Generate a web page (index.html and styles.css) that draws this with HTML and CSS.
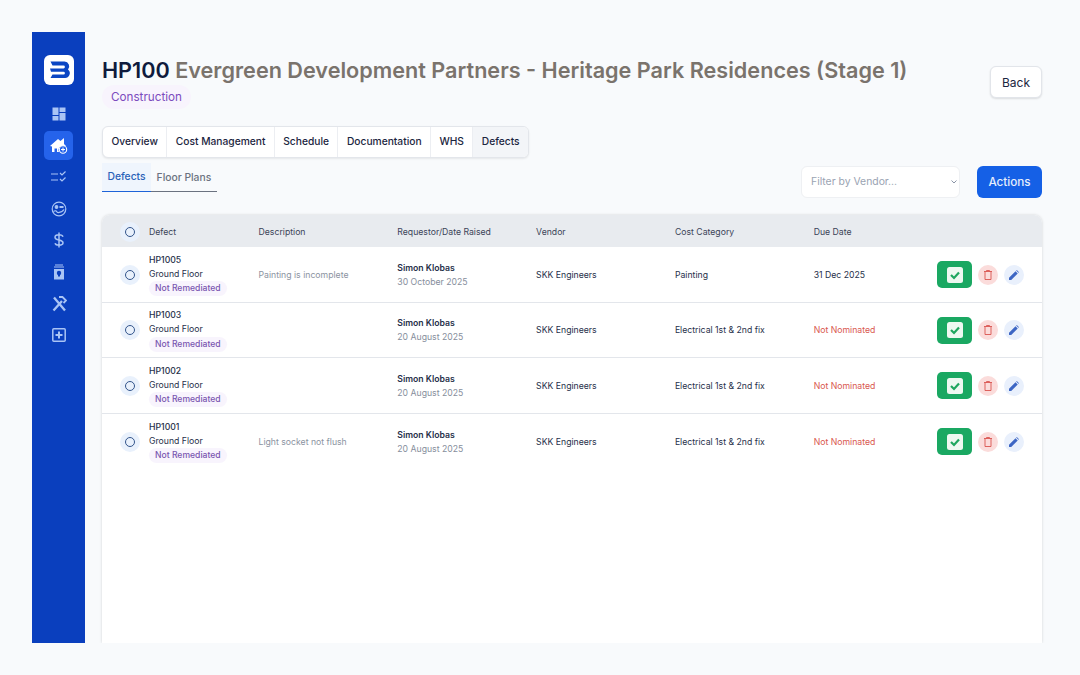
FILE: index.html
```html
<!DOCTYPE html>
<html lang="en">
<head>
<meta charset="utf-8">
<title>HP100 Defects</title>
<link rel="stylesheet" href="styles.css">
</head>
<body>
<div class="frame">
  <nav class="sidebar">
    <div class="logo">
      <svg width="30" height="30" viewBox="0 0 30 30"><rect width="30" height="30" rx="6" fill="#fff"/><path d="M6.500 6.500h14a4.800 4.800 0 0 1 3.500 8 4.800 4.800 0 0 1-3.500 8.500H6.500l2-3.400h11a1.400 1.400 0 0 0 0-2.800H7l-1-3.400H19.500a1.400 1.400 0 0 0 0-2.800H8.500z" fill="#0b46c4"/></svg>
    </div>
    <a class="nav-item"><svg width="16" height="16" viewBox="0 0 16 16" fill="#a9c4f5"><rect x="1.500" y="1.500" width="6" height="7.500"/><rect x="8.500" y="1.500" width="6" height="4.500"/><rect x="1.500" y="10" width="6" height="4.500"/><rect x="8.500" y="7" width="6" height="7.500"/></svg></a>
    <a class="nav-item active"><svg width="18" height="17" viewBox="0 0 18 17"><path d="M0 9 8 2l2.500 2L14 1v6l2 2h-3a4 4 0 0 0-4 6H2V9.500z" fill="#fff"/><circle cx="13" cy="12.500" r="3.700" fill="#2563eb" stroke="#fff" stroke-width="1.100"/><path d="M11 12.500h4M13 10.500v4" stroke="#fff" stroke-width="1"/><path d="M4.500 15v-3.500h2.500V15" fill="#2563eb"/></svg></a>
    <a class="nav-item"><svg width="16" height="14" viewBox="0 0 16 14" fill="none" stroke="#a9c4f5" stroke-width="1.200"><path d="M0 4h7M0 10h7M9 3l2 2 3.500-3.500M9 9l2 2 3.500-3.500"/></svg></a>
    <a class="nav-item"><svg width="16" height="16" viewBox="0 0 16 16" fill="none" stroke="#a9c4f5" stroke-width="1.200"><circle cx="8" cy="8" r="6.800"/><path d="M2.500 10.500c2-1.500 3-.5 4 1 2.500.2 5-.7 6.500-3" /><circle cx="5.500" cy="6" r="1.300" fill="#a9c4f5"/><rect x="8.500" y="5" width="4" height="2" fill="#a9c4f5" stroke="none"/></svg></a>
    <a class="nav-item"><svg width="12" height="16" viewBox="0 0 12 16" fill="none" stroke="#a9c4f5" stroke-width="1.500"><path d="M10 4.800C9.500 3.200 8 2.800 6 2.800 4 2.800 2 3.500 2 5.200c0 3.800 8 1.800 8 5.600 0 1.700-2 2.400-4 2.400-2 0-3.500-.5-4-2M6 .5v15"/></svg></a>
    <a class="nav-item"><svg width="12" height="16" viewBox="0 0 12 16"><path d="M2 .5h8v1H2zM1 2.500h10v1H1z" fill="#a9c4f5"/><path d="M1 5h10v10.500H1z" fill="#a9c4f5"/><circle cx="6" cy="9" r="2.200" fill="#0b3fbd"/><rect x="5" y="10.500" width="2" height="2" fill="#0b3fbd"/></svg></a>
    <a class="nav-item"><svg width="16" height="16" viewBox="0 0 16 16" fill="none" stroke="#a9c4f5" stroke-width="2.300"><path d="M2.500 14.500 11 5M3 1.500l11 13"/><path d="M8 1h3.500L15 4.500 12.500 7" stroke-width="1.800"/></svg></a>
    <a class="nav-item"><svg width="14" height="14" viewBox="0 0 14 14" fill="none" stroke="#a9c4f5"><rect x=".8" y=".8" width="12.400" height="12.400" rx="1" stroke-width="1.500"/><path d="M7 3.500v7M3.500 7h7" stroke-width="2"/></svg></a>
  </nav>
  <main class="main">
    <header class="head">
      <div>
        <h1 class="title"><span class="code">HP100</span> Evergreen Development Partners - Heritage Park Residences (Stage 1)</h1>
        <span class="stage">Construction</span>
      </div>
      <button class="back">Back</button>
    </header>
    <div class="tabs">
      <a class="tab">Overview</a><a class="tab">Cost Management</a><a class="tab">Schedule</a><a class="tab">Documentation</a><a class="tab">WHS</a><a class="tab current">Defects</a>
    </div>
    <div class="toolbar">
      <div class="subtabs"><a class="subtab on">Defects</a><a class="subtab">Floor Plans</a></div>
      <div class="controls">
        <div class="filter"><span>Filter by Vendor...</span><svg width="6" height="4" viewBox="0 0 6 4" fill="none" stroke="#8a94a6"><path d="M.5.5 3 3 5.500.5"/></svg></div>
        <button class="actions">Actions</button>
      </div>
    </div>
    <section class="card">
      <div class="row header">
        <span class="radio-wrap"><i class="radio"></i></span>
        <span>Defect</span><span>Description</span><span>Requestor/Date Raised</span><span>Vendor</span><span>Cost Category</span><span>Due Date</span><span></span>
      </div>
      <div class="row">
        <span class="radio-wrap"><i class="radio"></i></span>
        <div class="defect"><b>HP1005</b><span>Ground Floor</span><em>Not Remediated</em></div>
        <span class="muted">Painting is incomplete</span>
        <div class="req"><b>Simon Klobas</b><span>30 October 2025</span></div>
        <span>SKK Engineers</span><span>Painting</span><span>31 Dec 2025</span>
        <div class="btns"><span class="ok"><svg width="16" height="16" viewBox="0 0 16 16"><rect width="16" height="16" rx="2.500" fill="#eef8f1"/><path d="m4 8 3 3 5-5.500" fill="none" stroke="#1fa65f" stroke-width="2.200"/></svg></span><span class="del"><svg width="8" height="10" viewBox="0 0 8 10" fill="none" stroke="#d9534f" stroke-width=".9"><path d="M0 1.500h8M2.500 1.500V.5h3v1M1 1.500v8h6v-8"/></svg></span><span class="edit"><svg width="10" height="10" viewBox="0 0 10 10"><path d="M0 10V7.800L6.500 1.300l2.200 2.200L2.200 10zM7.200.6l.6-.6L10 2.200l-.6.600z" fill="#3d66c4"/></svg></span></div>
      </div>
      <div class="row">
        <span class="radio-wrap"><i class="radio"></i></span>
        <div class="defect"><b>HP1003</b><span>Ground Floor</span><em>Not Remediated</em></div>
        <span class="muted"></span>
        <div class="req"><b>Simon Klobas</b><span>20 August 2025</span></div>
        <span>SKK Engineers</span><span>Electrical 1st &amp; 2nd fix</span><span class="none">Not Nominated</span>
        <div class="btns"><span class="ok"><svg width="16" height="16" viewBox="0 0 16 16"><rect width="16" height="16" rx="2.500" fill="#eef8f1"/><path d="m4 8 3 3 5-5.500" fill="none" stroke="#1fa65f" stroke-width="2.200"/></svg></span><span class="del"><svg width="8" height="10" viewBox="0 0 8 10" fill="none" stroke="#d9534f" stroke-width=".9"><path d="M0 1.500h8M2.500 1.500V.5h3v1M1 1.500v8h6v-8"/></svg></span><span class="edit"><svg width="10" height="10" viewBox="0 0 10 10"><path d="M0 10V7.800L6.500 1.300l2.200 2.200L2.200 10zM7.200.6l.6-.6L10 2.200l-.6.600z" fill="#3d66c4"/></svg></span></div>
      </div>
      <div class="row">
        <span class="radio-wrap"><i class="radio"></i></span>
        <div class="defect"><b>HP1002</b><span>Ground Floor</span><em>Not Remediated</em></div>
        <span class="muted"></span>
        <div class="req"><b>Simon Klobas</b><span>20 August 2025</span></div>
        <span>SKK Engineers</span><span>Electrical 1st &amp; 2nd fix</span><span class="none">Not Nominated</span>
        <div class="btns"><span class="ok"><svg width="16" height="16" viewBox="0 0 16 16"><rect width="16" height="16" rx="2.500" fill="#eef8f1"/><path d="m4 8 3 3 5-5.500" fill="none" stroke="#1fa65f" stroke-width="2.200"/></svg></span><span class="del"><svg width="8" height="10" viewBox="0 0 8 10" fill="none" stroke="#d9534f" stroke-width=".9"><path d="M0 1.500h8M2.500 1.500V.5h3v1M1 1.500v8h6v-8"/></svg></span><span class="edit"><svg width="10" height="10" viewBox="0 0 10 10"><path d="M0 10V7.800L6.500 1.300l2.200 2.200L2.200 10zM7.200.6l.6-.6L10 2.200l-.6.600z" fill="#3d66c4"/></svg></span></div>
      </div>
      <div class="row last">
        <span class="radio-wrap"><i class="radio"></i></span>
        <div class="defect"><b>HP1001</b><span>Ground Floor</span><em>Not Remediated</em></div>
        <span class="muted">Light socket not flush</span>
        <div class="req"><b>Simon Klobas</b><span>20 August 2025</span></div>
        <span>SKK Engineers</span><span>Electrical 1st &amp; 2nd fix</span><span class="none">Not Nominated</span>
        <div class="btns"><span class="ok"><svg width="16" height="16" viewBox="0 0 16 16"><rect width="16" height="16" rx="2.500" fill="#eef8f1"/><path d="m4 8 3 3 5-5.500" fill="none" stroke="#1fa65f" stroke-width="2.200"/></svg></span><span class="del"><svg width="8" height="10" viewBox="0 0 8 10" fill="none" stroke="#d9534f" stroke-width=".9"><path d="M0 1.500h8M2.500 1.500V.5h3v1M1 1.500v8h6v-8"/></svg></span><span class="edit"><svg width="10" height="10" viewBox="0 0 10 10"><path d="M0 10V7.800L6.500 1.300l2.200 2.200L2.200 10zM7.200.6l.6-.6L10 2.200l-.6.600z" fill="#3d66c4"/></svg></span></div>
      </div>
    </section>
  </main>
</div>
</body>
</html>
```
FILE: styles.css
```css
* { box-sizing: border-box; }
html, body { margin: 0; height: 675px; overflow: hidden; background: #f8fafc; font-family: Inter, "Liberation Sans", sans-serif; color: #1b2540; }
.frame { display: flex; height: 611px; margin: 32px 38px 0 32px; }
.sidebar { width: 53px; flex: none; background: #0a3fbe; display: flex; flex-direction: column; align-items: center; padding-top: 23px; }
.logo { height: 30px; margin-bottom: 14px; }
.nav-item { width: 29px; height: 29px; margin-bottom: 2.700px; border-radius: 5px; display: flex; align-items: center; justify-content: center; }
.nav-item.active { background: #2563eb; }
.main { flex: 1; padding-left: 17px; min-width: 0; display: flex; flex-direction: column; }
.head { display: flex; justify-content: space-between; align-items: flex-start; padding-top: 25px; height: 94px; }
.title { margin: 0; font-size: 21.630px; line-height: 26px; font-weight: 600; color: #7a736c; white-space: nowrap; }
.code { color: #0f1b3d; }
.stage { display: inline-block; margin-top: 2px; height: 24px; line-height: 24px; padding: 0 9px; border-radius: 12px; background: #f8f4fd; color: #7c4bbd; font-size: 11.700px; }
.back { margin-top: 9px; width: 52px; height: 32px; background: #fff; border: 1px solid #e2e5ea; border-radius: 6px; box-shadow: 0 1px 2px rgba(0,0,0,.12); font: 400 12px Inter, sans-serif; color: #1b2540; }
.tabs { display: inline-flex; align-self: flex-start; background: #fff; border: 1px solid #e3e6eb; border-radius: 6px; box-shadow: 0 1px 2px rgba(0,0,0,.08); height: 32px; overflow: hidden; }
.tab { display: flex; align-items: center; padding: 0 8.400px 2px; font-size: 10.250px; font-weight: 500; color: #1b2540; border-right: 1px solid #eceef2; white-space: nowrap; }
.tab.current { background: #f3f5f8; border-right: 0; }
.toolbar { display: flex; justify-content: space-between; align-items: flex-start; height: 57px; }
.subtabs { display: flex; margin-top: 5px; border-bottom: 1px solid #6b7280; height: 29px; width: 115px; }
.subtab { display: flex; align-items: center; height: 27px; padding: 0 5.500px; font-size: 10.300px; font-weight: 500; color: #6b7280; white-space: nowrap; }
.subtab.on { background: #eff5fd; color: #2a62b8; margin-bottom: -1px; height: 29px; padding-bottom: 2px; border-bottom: 1px solid #1e63d8; }
.controls { display: flex; gap: 17px; margin-top: 8px; }
.filter { width: 159px; height: 32px; background: #fff; border: 1px solid #eef0f3; border-radius: 6px; display: flex; align-items: center; justify-content: space-between; padding: 0 2px 1px 9px; font-size: 10.400px; color: #9aa3b2; }
.actions { width: 65px; height: 32px; padding: 0 0 1px; background: #1560e6; border: 0; border-radius: 6px; color: #e6eefc; font: 500 11.700px Inter, sans-serif; }
.card { flex: 1; background: #fff; border-radius: 8px 8px 0 0; box-shadow: 0 0 3px rgba(0,0,0,.16); clip-path: inset(-4px -4px 0 -4px); overflow: hidden; }
.row { display: grid; grid-template-columns: 47px 109.500px 138.800px 138.800px 138.800px 138.800px 1fr 122px; align-items: center; height: 55.500px; padding-top: 1px; border-bottom: 1px solid #e3e6eb; font-size: 8.700px; color: #27304a; }
.row.last { border-bottom: 0; }
.row.header { height: 32px; background: #e8ebef; border-bottom: 0; color: #3b4458; }
.radio-wrap { width: 20px; height: 20px; margin-left: 18px; border-radius: 50%; background: #e9f1fc; display: flex; align-items: center; justify-content: center; }
.radio { width: 10px; height: 10px; border: 1px solid #33558c; border-radius: 50%; }
.defect { display: flex; flex-direction: column; align-items: flex-start; margin-top: -1px; }
.defect b, .defect span { font-weight: 400; line-height: 14px; font-size: 8.700px; }
.defect b { font-weight: 500; }
.defect em { font-style: normal; height: 15px; line-height: 15px; margin-top: 0.500px; padding: 0 6px; border-radius: 8px; background: #f8f4fd; color: #7a56b0; font-size: 8.600px; font-weight: 500; }
.muted { color: #8b93a1; }
.req { display: flex; flex-direction: column; gap: 4px; line-height: 10px; }
.req b { font-weight: 600; }
.req span { color: #868e9c; }
.none { color: #d9584f; }
.btns { display: flex; align-items: center; gap: 6px; justify-content: flex-end; padding-right: 18px; }
.ok { width: 35px; height: 27px; background: #1aa862; border-radius: 5px; display: flex; align-items: center; justify-content: center; }
.del, .edit { width: 20px; height: 20px; border-radius: 50%; display: flex; align-items: center; justify-content: center; }
.del { background: #fbdcdb; }
.edit { background: #e9f0fc; }
```
